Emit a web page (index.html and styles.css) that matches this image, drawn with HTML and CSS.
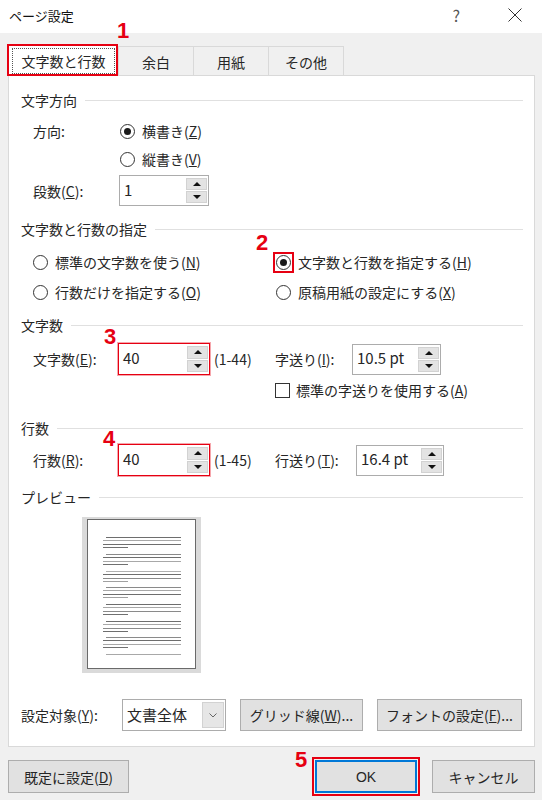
FILE: index.html
```html
<!DOCTYPE html>
<html lang="ja">
<head>
<meta charset="utf-8">
<title>ページ設定</title>
<link rel="stylesheet" href="styles.css">
</head>
<body>
<div class="dialog">
  <div class="titlebar">
    <span class="title">ページ設定</span>
    <span class="help">?</span>
    <svg class="close" width="14" height="14" viewBox="0 0 14 14"><path d="M0.5 0.5 L13.5 13.5 M13.5 0.5 L0.5 13.5" stroke="#333" stroke-width="1" fill="none"/></svg>
  </div>
  <div class="main">
    <div class="tabs">
      <div class="tab sel"><span class="focus">文字数と行数</span></div>
      <div class="tab">余白</div>
      <div class="tab">用紙</div>
      <div class="tab last">その他</div>
    </div>
    <div class="panel">
      <div class="hdr">文字方向</div>
      <div class="row r-dir"><span class="lbl w87">方向:</span><span class="radio on"></span><span>横書き(<u>Z</u>)</span></div>
      <div class="row r-vert"><span class="radio"></span><span>縦書き(<u>V</u>)</span></div>
      <div class="row r-cols">
        <span class="lbl w86">段数(<u>C</u>):</span>
        <div class="spin w90"><span class="val">1</span><span class="btns"><span class="sb up"></span><span class="sb down"></span></span></div>
      </div>

      <div class="hdr mt13">文字数と行数の指定</div>
      <div class="grid">
        <div class="opt"><span class="radio"></span><span>標準の文字数を使う(<u>N</u>)</span></div>
        <div class="opt"><span class="mark"><span class="radio on"></span></span><span>文字数と行数を指定する(<u>H</u>)</span></div>
        <div class="opt"><span class="radio"></span><span>行数だけを指定する(<u>O</u>)</span></div>
        <div class="opt"><span class="radio"></span><span>原稿用紙の設定にする(<u>X</u>)</span></div>
      </div>

      <div class="hdr mt13">文字数</div>
      <div class="row tall r-chars">
        <span class="lbl w85">文字数(<u>E</u>):</span>
        <div class="spin red w92"><span class="val">40</span><span class="btns"><span class="sb up"></span><span class="sb down"></span></span></div>
        <span class="range">(1-44)</span>
        <span class="lbl w77">字送り(<u>I</u>):</span>
        <div class="spin w89"><span class="val">10.5 pt</span><span class="btns"><span class="sb up"></span><span class="sb down"></span></span></div>
      </div>
      <div class="row r-check"><span class="check"></span><span>標準の字送りを使用する(<u>A</u>)</span></div>

      <div class="hdr mt18">行数</div>
      <div class="row tall r-lines">
        <span class="lbl w85">行数(<u>R</u>):</span>
        <div class="spin red w92"><span class="val">40</span><span class="btns"><span class="sb up"></span><span class="sb down"></span></span></div>
        <span class="range">(1-45)</span>
        <span class="lbl w81">行送り(<u>T</u>):</span>
        <div class="spin w88"><span class="val">16.4 pt</span><span class="btns"><span class="sb up"></span><span class="sb down"></span></span></div>
      </div>

      <div class="hdr mt11">プレビュー</div>
      <div class="preview">
        <div class="page">
          <svg width="107" height="148" viewBox="0 0 107 148" shape-rendering="crispEdges">
            <g stroke-width="1">
              <line x1="18" y1="17.5" x2="93" y2="17.5" stroke="#6e6e6e"/>
              <line x1="15" y1="20.5" x2="93" y2="20.5" stroke="#a8a8a8"/>
              <line x1="15" y1="24.5" x2="93" y2="24.5" stroke="#6e6e6e"/>
              <line x1="15" y1="27.5" x2="40" y2="27.5" stroke="#707070"/>

              <line x1="18" y1="34.5" x2="93" y2="34.5" stroke="#8a8a8a"/>
              <line x1="15" y1="37.5" x2="93" y2="37.5" stroke="#6e6e6e"/>
              <line x1="15" y1="41.5" x2="93" y2="41.5" stroke="#a8a8a8"/>
              <line x1="15" y1="44.5" x2="40" y2="44.5" stroke="#707070"/>

              <line x1="18" y1="51.5" x2="93" y2="51.5" stroke="#b0b0b0"/>
              <line x1="15" y1="54.5" x2="93" y2="54.5" stroke="#6e6e6e"/>
              <line x1="15" y1="58.5" x2="93" y2="58.5" stroke="#8a8a8a"/>
              <line x1="15" y1="61.5" x2="40" y2="61.5" stroke="#a0a0a0"/>

              <line x1="18" y1="67.5" x2="93" y2="67.5" stroke="#8a8a8a"/>
              <line x1="15" y1="70.5" x2="93" y2="70.5" stroke="#a8a8a8"/>
              <line x1="15" y1="74.5" x2="93" y2="74.5" stroke="#6e6e6e"/>
              <line x1="15" y1="77.5" x2="40" y2="77.5" stroke="#a0a0a0"/>

              <line x1="18" y1="84.5" x2="93" y2="84.5" stroke="#6e6e6e"/>
              <line x1="15" y1="87.5" x2="93" y2="87.5" stroke="#a8a8a8"/>
              <line x1="15" y1="91.5" x2="93" y2="91.5" stroke="#8a8a8a"/>
              <line x1="15" y1="94.5" x2="40" y2="94.5" stroke="#707070"/>

              <line x1="18" y1="101.5" x2="93" y2="101.5" stroke="#6e6e6e"/>
              <line x1="15" y1="104.5" x2="93" y2="104.5" stroke="#a8a8a8"/>
              <line x1="15" y1="108.5" x2="93" y2="108.5" stroke="#8a8a8a"/>
              <line x1="15" y1="111.5" x2="40" y2="111.5" stroke="#6e6e6e"/>

              <line x1="18" y1="117.5" x2="93" y2="117.5" stroke="#8a8a8a"/>
              <line x1="15" y1="120.5" x2="93" y2="120.5" stroke="#6e6e6e"/>
              <line x1="15" y1="124.5" x2="93" y2="124.5" stroke="#a8a8a8"/>
              <line x1="15" y1="127.5" x2="40" y2="127.5" stroke="#707070"/>

              <line x1="18" y1="134.5" x2="93" y2="134.5" stroke="#a8a8a8"/>
            </g>
          </svg>
        </div>
      </div>

      <div class="row tall r-target">
        <span class="lbl w101">設定対象(<u>Y</u>):</span>
        <div class="select"><span class="val">文書全体</span><span class="dd"><svg width="8" height="5" viewBox="0 0 8 5"><path d="M0.5 0.5 L4 4 L7.5 0.5" stroke="#666" stroke-width="1" fill="none"/></svg></span></div>
        <span class="btn b-grid">グリッド線(<u>W</u>)...</span>
        <span class="btn b-font">フォントの設定(<u>F</u>)...</span>
      </div>
    </div>
    <div class="footer">
      <span class="btn fbtn b-def">既定に設定(<u>D</u>)</span>
      <span class="btn fbtn b-ok">OK</span>
      <span class="btn fbtn b-cancel">キャンセル</span>
    </div>
  </div>

  <span class="num n1">1</span>
  <span class="num n2">2</span>
  <span class="num n3">3</span>
  <span class="num n4">4</span>
  <span class="num n5">5</span>
</div>
</body>
</html>
```

FILE: styles.css
```css
* { box-sizing: border-box; }

body {
  margin: 0;
  background: #f0f0f0;
  font-family: "Noto Sans CJK JP", "Noto Sans", sans-serif;
  font-size: 14px;
  color: #262626;
}

.dialog {
  position: relative;
  width: 542px;
  height: 800px;
  background: #f0f0f0;
  overflow: hidden;
}

/* title bar */
.titlebar {
  height: 33px;
  background: #fff;
  display: flex;
  align-items: center;
  padding: 0 0 3px 9px;
}
.title { flex: 1; font-size: 13px; line-height: 1; color: #111; }
.help { font-size: 16px; line-height: 1; color: #555; margin-right: 48px; }
.close { margin-right: 20px; }

.main { padding: 13px 7px 0 8px; }

/* tabs */
.tabs {
  display: flex;
  align-items: flex-end;
  height: 29px;
  margin-left: -1px;
}
.tab {
  width: 75px;
  height: 29px;
  border-top: 1px solid #d9d9d9;
  border-left: 1px solid #d9d9d9;
  background: #f0f0f0;
  display: flex;
  align-items: center;
  justify-content: center;
  padding-top: 1px;
  line-height: 20px;
}
.tab.last { width: 76px; border-right: 1px solid #d9d9d9; }
.tab.sel {
  position: relative;
  z-index: 1;
  width: 111px;
  height: 32px;
  margin-bottom: -1px;
  background: #fff;
  border: 2px solid #e60012;
  padding: 2px 1px 0 3px;
  align-items: flex-start;
}
.focus {
  flex: 1;
  height: 26px;
  border: 1px dotted #555;
  display: flex;
  align-items: center;
  justify-content: center;
}

/* panel */
.panel {
  background: #fff;
  border: 1px solid #d9d9d9;
  height: 672px;
  padding: 14px 11px 0 12px;
}

.hdr {
  display: flex;
  align-items: center;
  height: 20px;
  line-height: 20px;
  gap: 8px;
}
.hdr::after {
  content: "";
  flex: 1;
  height: 1px;
  background: #e0e0e0;
}
.mt11 { margin-top: 11px; }
.mt13 { margin-top: 13px; }
.mt18 { margin-top: 18px; }

.row {
  display: flex;
  align-items: center;
  height: 20px;
  line-height: 20px;
  padding-left: 12px;
}
.row.tall { height: 32px; }

.r-dir { margin-top: 11px; }
.r-vert { margin-top: 8px; padding-left: 99px; }
.r-cols { margin-top: 6px; height: 31px; }
.r-chars { margin-top: 8px; }
.r-check { margin-top: 5px; padding-left: 254px; }
.r-lines { margin-top: 6px; }
.r-target { margin-top: 26px; padding-left: 0; }

.lbl { flex: none; }
.w77 { width: 77px; }
.w81 { width: 81px; }
.w85 { width: 85px; }
.w86 { width: 86px; }
.w87 { width: 87px; }
.w101 { width: 101px; }

/* radio / check */
.radio {
  flex: none;
  width: 15px;
  height: 15px;
  border: 1px solid #333;
  border-radius: 50%;
  background: #fff;
  display: inline-flex;
  align-items: center;
  justify-content: center;
  margin-right: 7px;
}
.radio.on::after {
  content: "";
  width: 7px;
  height: 7px;
  border-radius: 50%;
  background: #1a1a1a;
}
.mark {
  flex: none;
  display: inline-flex;
  width: 15px;
  height: 15px;
  margin-right: 7px;
  outline: 2px solid #e60012;
  outline-offset: 1px;
}
.mark .radio { margin-right: 0; }

.check {
  flex: none;
  width: 15px;
  height: 15px;
  border: 1px solid #333;
  background: #fff;
  margin-right: 6px;
}

.grid {
  display: grid;
  grid-template-columns: 243px auto;
  row-gap: 10px;
  margin-top: 13px;
  padding-left: 12px;
}
.opt {
  display: flex;
  align-items: center;
  height: 20px;
  line-height: 20px;
}

/* spin box */
.spin {
  flex: none;
  display: flex;
  align-items: stretch;
  height: 31px;
  border: 1px solid #acacac;
  background: #fff;
  padding: 2px 1px 2px 2px;
}
.spin.red {
  border-color: #e60012;
  box-shadow: 0 0 0 1px rgba(230, 0, 18, 0.35);
  height: 32px;
}
.w88 { width: 88px; }
.w89 { width: 89px; }
.w90 { width: 90px; }
.w92 { width: 92px; }
.spin .val {
  flex: 1;
  display: flex;
  align-items: center;
  padding-left: 2px;
  padding-bottom: 2px;
  font-size: 15px;
}
.btns {
  width: 21px;
  display: flex;
  flex-direction: column;
  gap: 1px;
}
.sb {
  flex: 1;
  background: #e3e3e3;
  border: 1px solid #d2d2d2;
  display: flex;
  align-items: center;
  justify-content: center;
}
.sb.up::after {
  content: "";
  border-left: 4px solid transparent;
  border-right: 4px solid transparent;
  border-bottom: 4px solid #111;
}
.sb.down::after {
  content: "";
  border-left: 4px solid transparent;
  border-right: 4px solid transparent;
  border-top: 4px solid #111;
}
.range { flex: none; width: 61px; margin-left: 4px; }

/* preview */
.preview {
  margin: 10px 0 0 61px;
  width: 119px;
  height: 156px;
  background: #dadada;
  padding: 2px 5px 4px 5px;
}
.page {
  width: 109px;
  height: 150px;
  background: #fff;
  border: 1px solid #6a6a6a;
}
.page svg { display: block; }

/* select & buttons */
.select {
  flex: none;
  display: flex;
  width: 104px;
  height: 32px;
  border: 1px solid #acacac;
  background: #fff;
  padding: 2px 1px 2px 2px;
}
.select .val {
  flex: 1;
  display: flex;
  align-items: center;
  padding-left: 2px;
  font-size: 15px;
}
.dd {
  width: 22px;
  background: #e6e6e6;
  border: 1px solid #d2d2d2;
  display: flex;
  align-items: center;
  justify-content: center;
}

.btn {
  flex: none;
  display: flex;
  align-items: center;
  justify-content: center;
  height: 32px;
  background: #e1e1e1;
  border: 1px solid #adadad;
  line-height: 20px;
}
.b-grid { width: 123px; margin-left: 14px; }
.b-font { width: 145px; margin-left: 14px; }

.footer {
  display: flex;
  margin-top: 13px;
}
.fbtn { height: 33px; }
.b-def { width: 121px; }
.b-ok {
  width: 102px;
  margin-left: auto;
  border: 1px solid #0078d7;
  box-shadow: inset 0 0 0 1px #0078d7;
  outline: 2px solid #e60012;
  outline-offset: 1px;
  font-family: "Liberation Sans", "Noto Sans", sans-serif;
  font-size: 14px;
}
.b-cancel { width: 103px; margin-left: 15px; }

/* annotation numbers */
.num {
  position: absolute;
  font-family: "Liberation Sans", Arial, sans-serif;
  font-weight: bold;
  font-size: 22px;
  line-height: 22px;
  color: #e60012;
}
.n1 { left: 117px; top: 20px; }
.n2 { left: 256px; top: 232px; }
.n3 { left: 104px; top: 326px; }
.n4 { left: 103px; top: 428px; }
.n5 { left: 295px; top: 749px; }
```
